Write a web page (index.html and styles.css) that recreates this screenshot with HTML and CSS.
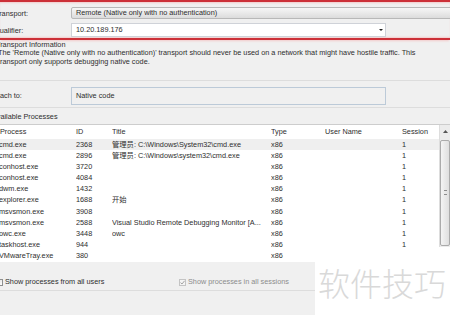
FILE: index.html
```html
<!DOCTYPE html>
<html lang="en">
<head>
    <meta charset="UTF-8">
    <title>Attach to Process</title>
    <link rel="stylesheet" href="styles.css">
</head>
<body>
    <div class="screen">

        <div class="conn">
            <div class="row">
                <span class="lbl lbl-transport">Transport:</span>
                <div class="combo">Remote (Native only with no authentication)</div>
            </div>
            <div class="row">
                <span class="lbl lbl-qual">Qualifier:</span>
                <div class="field">10.20.189.176<i class="arrow"></i></div>
            </div>
        </div>

        <div class="info">
            <h2>Transport Information</h2>
            <p>The 'Remote (Native only with no authentication)' transport should never be used on a network that might have hostile traffic. This<br>transport only supports debugging native code.</p>
        </div>

        <div class="attach">
            <span class="lbl lbl-attach">Attach to:</span>
            <div class="ro">Native code</div>
        </div>

        <div class="grp">Available Processes</div>

        <div class="list">
            <div class="grid">
                <div class="tr hd">
                    <span class="c-proc">Process</span><span>ID</span><span>Title</span><span>Type</span><span>User Name</span><span>Session</span>
                </div>
                <div class="tr sel"><span>cmd.exe</span><span>2368</span><span>管理员: C:\Windows\System32\cmd.exe</span><span>x86</span><span></span><span>1</span></div>
                <div class="tr"><span>cmd.exe</span><span>2896</span><span>管理员: C:\Windows\system32\cmd.exe</span><span>x86</span><span></span><span>1</span></div>
                <div class="tr"><span>conhost.exe</span><span>3720</span><span></span><span>x86</span><span></span><span>1</span></div>
                <div class="tr"><span>conhost.exe</span><span>4084</span><span></span><span>x86</span><span></span><span>1</span></div>
                <div class="tr"><span>dwm.exe</span><span>1432</span><span></span><span>x86</span><span></span><span>1</span></div>
                <div class="tr"><span>explorer.exe</span><span>1688</span><span>开始</span><span>x86</span><span></span><span>1</span></div>
                <div class="tr"><span>msvsmon.exe</span><span>3908</span><span></span><span>x86</span><span></span><span>1</span></div>
                <div class="tr"><span>msvsmon.exe</span><span>2588</span><span>Visual Studio Remote Debugging Monitor [A...</span><span>x86</span><span></span><span>1</span></div>
                <div class="tr"><span>owc.exe</span><span>3448</span><span>owc</span><span>x86</span><span></span><span>1</span></div>
                <div class="tr"><span>taskhost.exe</span><span>944</span><span></span><span>x86</span><span></span><span>1</span></div>
                <div class="tr"><span>VMwareTray.exe</span><span>380</span><span></span><span>x86</span><span></span><span></span></div>
            </div>
            <div class="vscroll">
                <div class="vs-up"><svg width="5" height="3" viewBox="0 0 5 3"><path d="M0 3 L2.5 0 L5 3 Z" fill="#555"/></svg></div>
                <div class="vs-thumb"><i class="grip"></i></div>
            </div>
        </div>

        <div class="opts">
            <label class="opt"><i class="chk"></i>Show processes from all users</label>
            <label class="opt off"><i class="chk on"><svg width="5" height="5" viewBox="0 0 5 5"><path d="M0.5 2.6 L2 4 L4.6 0.8" fill="none" stroke="#9a9a9a" stroke-width="0.9"/></svg></i>Show processes in all sessions</label>
        </div>

        <div class="mark">软件技巧</div>
    </div>
</body>
</html>
```

FILE: styles.css
```css
body {
    margin: 0;
    background-color: #f0f0f0;
    font-family: "Liberation Sans", "Noto Sans CJK SC", sans-serif;
    font-size: 7.3px;
    color: #2e2e2e;
}
.screen {
    width: 450px;
    height: 315px;
    overflow: hidden;
    position: relative;
}

/* red highlight round the connection rows */
.conn {
    display: flex;
    flex-direction: column;
    gap: 4px;
    padding: 5px 0 1px;
    border-top: 2px solid #cc3038;
    border-bottom: 2px solid #cc3038;
    box-shadow: inset 0 2px 2px -1px #f3caca, inset 0 -2px 2px -1px #f3caca, 0 2px 2px -1px #f3caca;
}
.row {
    display: flex;
    align-items: center;
}
.lbl {
    width: 71px;
    flex: none;
    white-space: nowrap;
}
.lbl-transport { text-indent: -5px; }
.lbl-qual { text-indent: -6px; }
.lbl-attach { text-indent: -9px; line-height: 18px; }
.combo {
    flex: 1;
    margin-right: -12px;
    height: 12px;
    box-sizing: border-box;
    padding-left: 4px;
    line-height: 10px;
    border: 1px solid #b8b8b8;
    border-radius: 2px;
    background: linear-gradient(#f6f6f6, #e9e9e9 50%, #dcdcdc);
}
.field {
    position: relative;
    width: 315px;
    height: 14px;
    box-sizing: border-box;
    padding-left: 4px;
    line-height: 12px;
    border: 1px solid #cfd2d8;
    background-color: #fff;
}
.arrow {
    position: absolute;
    right: 2px;
    top: 5px;
    border-left: 2px solid transparent;
    border-right: 2px solid transparent;
    border-top: 2px solid #222;
}

.info {
    height: 41px;
    padding-top: 1px;
    box-sizing: border-box;
    border-bottom: 1px solid #dddddd;
}
.info h2 {
    margin: 0;
    font-size: 7.3px;
    font-weight: normal;
    line-height: 8px;
    text-indent: -4px;
}
.info p {
    margin: 0 0 0 -2px;
    line-height: 8.5px;
}

.attach {
    display: flex;
    align-items: flex-start;
    padding: 6px 0 2px;
    border-bottom: 1px solid #dddddd;
}
.ro {
    width: 315px;
    height: 18px;
    box-sizing: border-box;
    padding-left: 4px;
    line-height: 16px;
    border: 1px solid #bccad8;
}

.grp {
    padding-top: 2px;
    line-height: 14px;
    text-indent: -8px;
}

/* process list */
.list {
    display: flex;
    height: 137px;
    border-top: 1px solid #cdcdcd;
    background-color: #fff;
}
.grid {
    flex: 1;
    margin-left: -1px;
    overflow: hidden;
}
.tr {
    display: grid;
    grid-template-columns: 77px 36px 159px 54px 77px 1fr;
    height: 11.2px;
    line-height: 11.2px;
    white-space: nowrap;
}
.tr span {
    overflow: hidden;
}
.tr.hd {
    height: 13.5px;
    line-height: 14px;
}
.c-proc { padding-left: 1px; }
.tr.sel { background-color: #efefef; }

.vscroll {
    width: 11px;
    flex: none;
    margin-right: -1px;
    display: flex;
    flex-direction: column;
    background-color: #ececec;
    border-left: 1px solid #dddddd;
}
.vs-up {
    height: 12px;
    display: flex;
    justify-content: center;
    align-items: center;
}
.vs-thumb {
    position: relative;
    height: 104px;
    margin: 3px 1px 0 0;
    border: 1px solid #ababab;
    border-radius: 2px;
    background: linear-gradient(90deg, #f4f4f4, #dfdfdf);
}
.grip {
    position: absolute;
    left: 3px;
    top: 49px;
    width: 3px;
    height: 3px;
    border-top: 1px solid #8c8c8c;
    border-bottom: 1px solid #8c8c8c;
}

.opts {
    display: grid;
    grid-template-columns: 183px auto;
    margin-left: -4px;
    padding-top: 12px;
    height: 29px;
    box-sizing: border-box;
    border-bottom: 1px solid #dddddd;
    line-height: 10px;
}
.opt {
    display: flex;
    align-items: center;
    gap: 2px;
    white-space: nowrap;
}
.opt.off { color: #8c8c8c; }
.chk {
    width: 7px;
    height: 7px;
    box-sizing: border-box;
    border: 1px solid #8e8f8f;
    background: linear-gradient(135deg, #dcdcdc, #ffffff);
    display: flex;
    align-items: center;
    justify-content: center;
}
.chk.on {
    border-color: #c4c4c4;
    background: #f4f4f4;
}

/* watermark pasted over the corner */
.mark {
    position: absolute;
    left: 315px;
    top: 247px;
    right: 0;
    bottom: 0;
    padding: 19px 0 0 3px;
    background-color: #fff;
    color: #d9d9d9;
    font-family: "Noto Sans CJK SC", sans-serif;
    font-size: 32px;
    font-weight: 300;
    line-height: 1;
    white-space: nowrap;
}
```
